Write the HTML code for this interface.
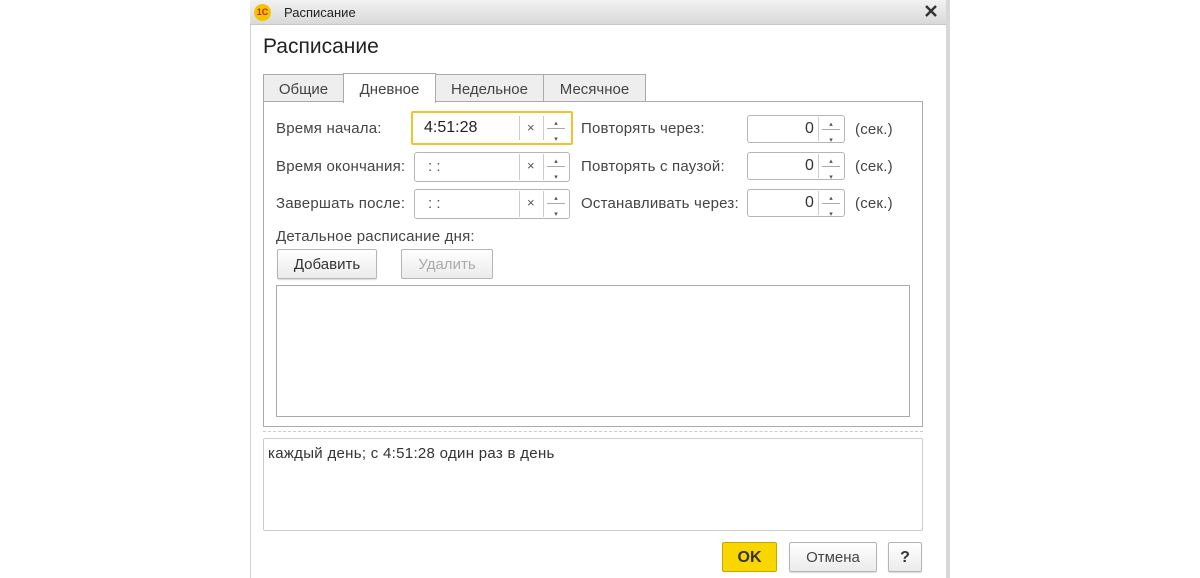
<!DOCTYPE html>
<html><head><meta charset="utf-8"><style>
*{box-sizing:border-box;margin:0;padding:0}
body{width:1200px;height:578px;background:#fff;position:relative;overflow:hidden;font-family:"Liberation Sans",sans-serif;font-size:15px;color:#333}
.a{position:absolute}
.win{left:250px;top:0;width:700px;height:578px;border-left:1px solid #d0d0d0;background:#fff}
.rb{left:946px;top:0;width:4px;height:578px;background:#d8d8d8}
.tb{left:250px;top:0;width:696px;height:25px;background:linear-gradient(#f2f2f2,#d9d9d9);border-bottom:1px solid #c8c8c8}
.tab{top:74px;height:28px;border:1px solid #aaa;background:#eee;color:#444;font-size:15px;text-align:center;line-height:30px}
.fld{border:1px solid #b5b5b5;border-radius:3px;background:#fff}
.lbl{font-size:15px;color:#444;letter-spacing:0.2px}
.btn{border:1px solid #b5b5b5;border-radius:2px;background:linear-gradient(#fff,#ebebeb);text-align:center;font-size:15px;box-shadow:0 1px 1px rgba(0,0,0,.15)}
.sp{font-size:7px;color:#555;line-height:8px;text-align:center}
</style></head><body>
<div class="a win"></div><div class="a rb"></div>
<div class="a tb"></div>
<div class="a" style="left:254px;top:4px;width:17px;height:17px;border-radius:50%;background:#f5c400;color:#c22;font-size:9px;font-weight:bold;text-align:center;line-height:17px">1С</div>
<div class="a" style="left:284px;top:5px;font-size:13px;color:#222">Расписание</div>
<svg class="a" style="left:925px;top:5px" width="12" height="12"><path d="M1 1L11 11M11 1L1 11" stroke="#333" stroke-width="2.4"/></svg>
<div class="a" style="left:263px;top:35px;font-size:21px;color:#222">Расписание</div>

<div class="a" style="left:263px;top:101px;width:660px;height:326px;border:1px solid #aaa"></div>
<div class="a tab" style="left:263px;width:81px">Общие</div>
<div class="a tab" style="left:343px;width:93px;top:73px;height:30px;background:#fff;border-bottom:none;line-height:32px">Дневное</div>
<div class="a tab" style="left:435px;width:109px">Недельное</div>
<div class="a tab" style="left:543px;width:103px">Месячное</div>

<div class="a lbl" style="left:276px;top:120px">Время начала:</div>
<div class="a lbl" style="left:276px;top:158px">Время окончания:</div>
<div class="a lbl" style="left:276px;top:195px">Завершать после:</div>

<div class="a" style="left:411px;top:111px;width:162px;height:34px;border:2px solid #f2c230;border-radius:2px;background:#fff"></div>
<div class="a" style="left:424px;top:119px;font-size:16px;color:#222">4:51:28</div>
<div class="a fld" style="left:414px;top:152px;width:156px;height:30px"></div>
<div class="a" style="left:428px;top:158px;color:#555">: :</div>
<div class="a fld" style="left:414px;top:189px;width:156px;height:30px"></div>
<div class="a" style="left:428px;top:195px;color:#555">: :</div>

<div class="a" style="left:519px;top:116px;width:1px;height:24px;background:#ccc"></div>
<div class="a" style="left:543px;top:116px;width:1px;height:24px;background:#ccc"></div>
<div class="a" style="left:519px;top:154px;width:1px;height:26px;background:#ccc"></div>
<div class="a" style="left:543px;top:154px;width:1px;height:26px;background:#ccc"></div>
<div class="a" style="left:519px;top:191px;width:1px;height:26px;background:#ccc"></div>
<div class="a" style="left:543px;top:191px;width:1px;height:26px;background:#ccc"></div>
<div class="a" style="left:527px;top:120px;font-size:13px;color:#555">×</div>
<div class="a" style="left:527px;top:158px;font-size:13px;color:#555">×</div>
<div class="a" style="left:527px;top:195px;font-size:13px;color:#555">×</div>

<div class="a lbl" style="left:581px;top:120px">Повторять через:</div>
<div class="a lbl" style="left:581px;top:158px">Повторять с паузой:</div>
<div class="a lbl" style="left:581px;top:195px">Останавливать через:</div>
<div class="a fld" style="left:747px;top:115px;width:98px;height:28px"></div>
<div class="a fld" style="left:747px;top:152px;width:98px;height:28px"></div>
<div class="a fld" style="left:747px;top:189px;width:98px;height:28px"></div>
<div class="a" style="left:805px;top:120px;font-size:16px;color:#333">0</div>
<div class="a" style="left:805px;top:157px;font-size:16px;color:#333">0</div>
<div class="a" style="left:805px;top:194px;font-size:16px;color:#333">0</div>
<div class="a" style="left:818px;top:117px;width:1px;height:24px;background:#ccc"></div>
<div class="a" style="left:818px;top:154px;width:1px;height:24px;background:#ccc"></div>
<div class="a" style="left:818px;top:191px;width:1px;height:24px;background:#ccc"></div>
<div class="a lbl" style="left:855px;top:121px">(сек.)</div>
<div class="a lbl" style="left:855px;top:158px">(сек.)</div>
<div class="a lbl" style="left:855px;top:195px">(сек.)</div>

<div class="a" style="left:547px;top:128px;width:18px;height:1px;background:#aaa"></div>
<div class="a" style="left:547px;top:166px;width:18px;height:1px;background:#aaa"></div>
<div class="a" style="left:547px;top:203px;width:18px;height:1px;background:#aaa"></div>
<div class="a" style="left:822px;top:129px;width:18px;height:1px;background:#aaa"></div>
<div class="a" style="left:822px;top:166px;width:18px;height:1px;background:#aaa"></div>
<div class="a" style="left:822px;top:203px;width:18px;height:1px;background:#aaa"></div>
<div class="a sp" style="left:545px;top:120px;width:22px">▴<br><br>▾</div>
<div class="a sp" style="left:545px;top:158px;width:22px">▴<br><br>▾</div>
<div class="a sp" style="left:545px;top:195px;width:22px">▴<br><br>▾</div>
<div class="a sp" style="left:820px;top:121px;width:22px">▴<br><br>▾</div>
<div class="a sp" style="left:820px;top:158px;width:22px">▴<br><br>▾</div>
<div class="a sp" style="left:820px;top:195px;width:22px">▴<br><br>▾</div>

<div class="a lbl" style="left:276px;top:228px">Детальное расписание дня:</div>
<div class="a btn" style="left:277px;top:249px;width:100px;height:30px;line-height:29px;color:#333">Добавить</div>
<div class="a btn" style="left:401px;top:249px;width:92px;height:30px;line-height:29px;color:#aaa;box-shadow:none">Удалить</div>
<div class="a" style="left:276px;top:285px;width:634px;height:132px;border:1px solid #aaa"></div>

<div class="a" style="left:263px;top:431px;width:660px;border-top:1px dashed #ccc"></div>
<div class="a" style="left:263px;top:438px;width:660px;height:93px;border:1px solid #ccc;border-radius:2px"></div>
<div class="a" style="left:268px;top:445px;font-size:15px;color:#333;letter-spacing:0.3px">каждый день; с 4:51:28 один раз в день</div>

<div class="a" style="left:722px;top:542px;width:55px;height:30px;background:#f9d600;border:1px solid #c8a800;border-radius:2px;text-align:center;line-height:29px;font-weight:bold;font-size:16px;color:#333">OK</div>
<div class="a btn" style="left:789px;top:542px;width:88px;height:30px;line-height:29px;color:#444">Отмена</div>
<div class="a btn" style="left:888px;top:542px;width:34px;height:30px;line-height:29px;font-weight:bold;color:#333;font-size:16px">?</div>
</body></html>
